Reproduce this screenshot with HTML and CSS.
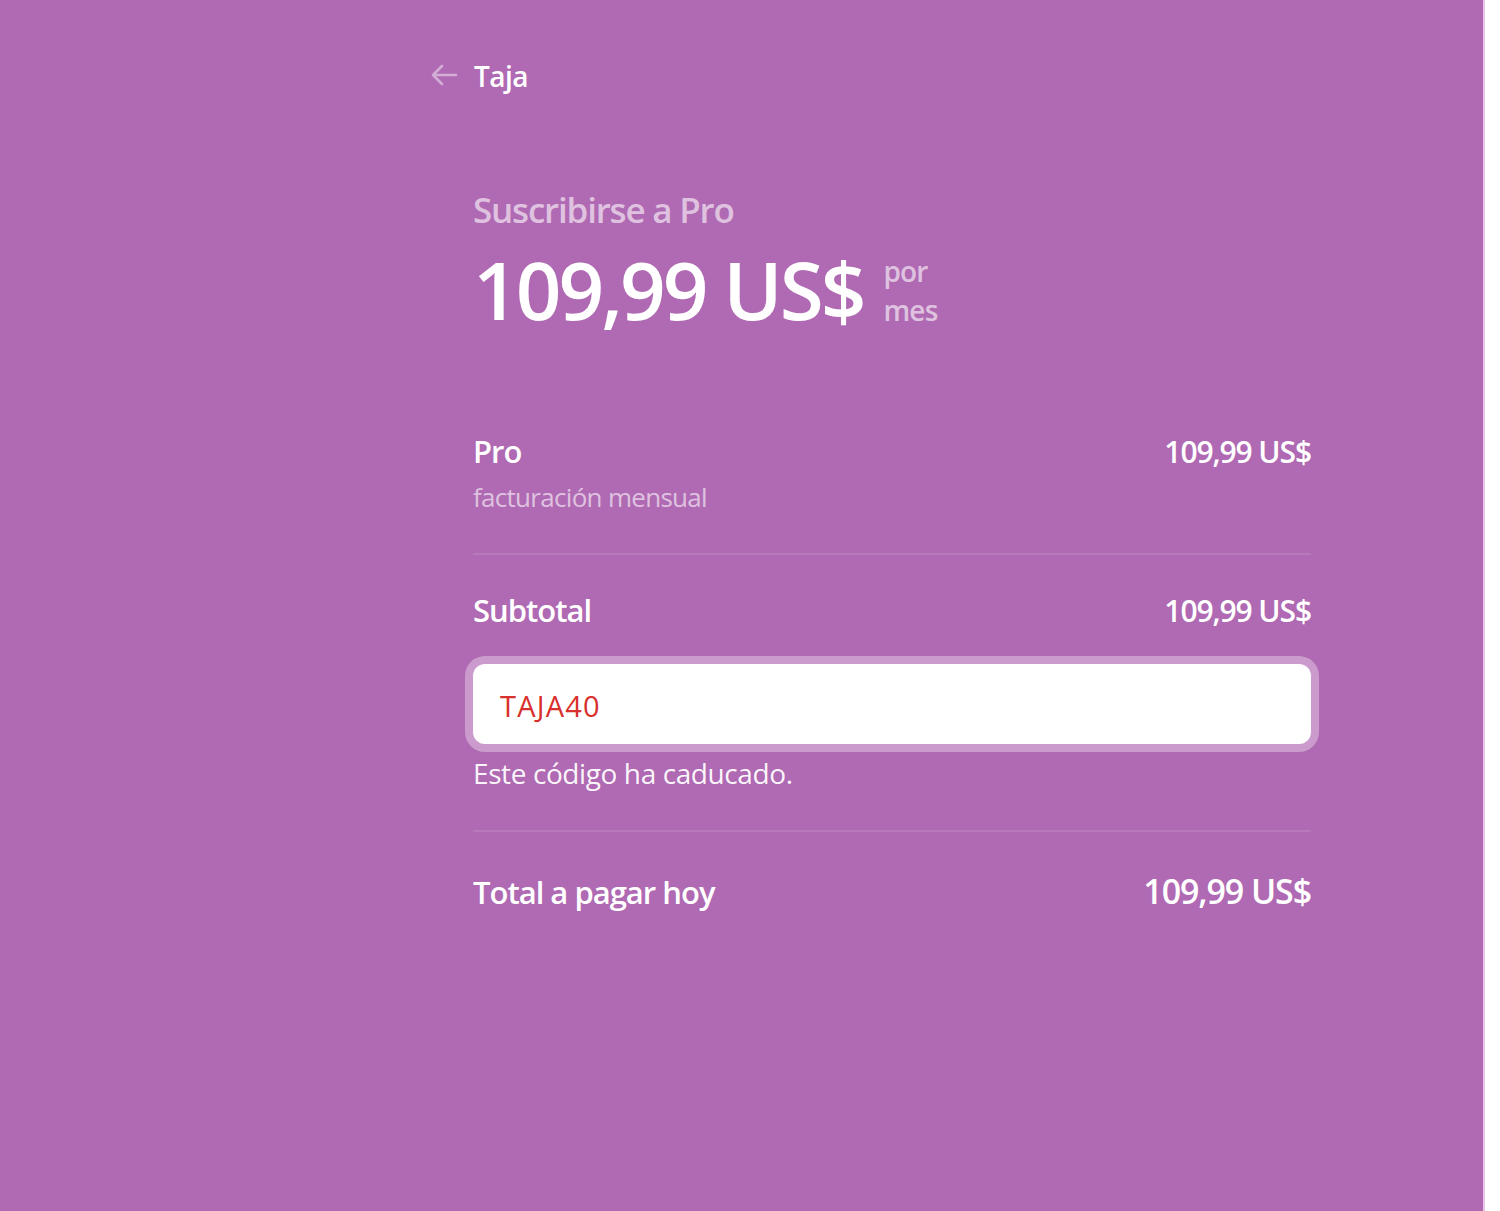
FILE: index.html
```html
<!DOCTYPE html>
<html lang="es">
<head>
<meta charset="utf-8">
<title>Taja - Suscribirse a Pro</title>
<link rel="stylesheet" href="styles.css">
</head>
<body>
<div class="page">
  <main class="panel">
    <header class="header">
      <svg class="back" width="28" height="22" viewBox="0 0 28 22" aria-hidden="true">
        <path d="M26 11H3M12 2L3 11l9 9" fill="none" stroke="currentColor" stroke-width="2.6" stroke-linecap="round" stroke-linejoin="round"/>
      </svg>
      <span class="brand">Taja</span>
    </header>
    <section class="summary">
      <div class="title">Suscribirse a Pro</div>
      <div class="price-row">
        <span class="price">109,99 US$</span>
        <span class="period"><span>por</span><span>mes</span></span>
      </div>
      <div class="item">
        <div class="row">
          <span class="label">Pro</span>
          <span class="amount">109,99 US$</span>
        </div>
        <div class="sub">facturación mensual</div>
      </div>
      <hr class="divider">
      <div class="row subtotal">
        <span class="label">Subtotal</span>
        <span class="amount">109,99 US$</span>
      </div>
      <div class="promo">TAJA40</div>
      <div class="error">Este código ha caducado.</div>
      <hr class="divider second">
      <div class="row total">
        <span class="label">Total a pagar hoy</span>
        <span class="amount big">109,99 US$</span>
      </div>
    </section>
  </main>
  <aside class="side"></aside>
</div>
</body>
</html>
```
FILE: styles.css
```css
html, body {
  margin: 0;
  padding: 0;
  height: 100%;
}
body {
  font-family: "Open Sans", "Noto Sans", sans-serif;
  background: #ffffff;
  color: #ffffff;
}
.page {
  display: flex;
  height: 1211px;
}
.panel {
  width: 1485px;
  background: #b06ab3;
  border-right: 2px solid #e7c6ea;
  padding: 56px 0 0 430px;
  box-sizing: border-box;
}
.side {
  flex: 1;
  background: #ffffff;
}
.header {
  display: flex;
  align-items: center;
  height: 40px;
}
.back {
  color: rgba(255, 255, 255, 0.45);
  margin-top: -2px;
}
.brand {
  margin-left: 16px;
  font-size: 28px;
  font-weight: 600;
  line-height: 40px;
  letter-spacing: -0.5px;
}
.summary {
  margin-left: 43px;
  width: 838px;
}
.title {
  margin-top: 90px;
  font-size: 35px;
  font-weight: 600;
  line-height: 48px;
  color: rgba(255, 255, 255, 0.6);
  letter-spacing: -1.2px;
}
.price-row {
  display: flex;
  align-items: flex-end;
  margin-top: 5px;
}
.price {
  font-size: 80px;
  font-weight: 600;
  line-height: 100px;
  letter-spacing: -3px;
}
.period {
  display: flex;
  flex-direction: column;
  margin: 0 0 9px 20px;
  font-size: 28px;
  font-weight: 600;
  line-height: 39px;
  color: rgba(255, 255, 255, 0.6);
  letter-spacing: -0.8px;
}
.item {
  margin-top: 90px;
}
.row {
  display: flex;
  justify-content: space-between;
  align-items: baseline;
}
.label {
  font-size: 31px;
  font-weight: 600;
  line-height: 44px;
  letter-spacing: -1px;
}
.amount {
  font-size: 30px;
  font-weight: 600;
  line-height: 44px;
  letter-spacing: -1.1px;
}
.amount.big {
  font-size: 34px;
  letter-spacing: -1.1px;
}
.sub {
  margin-top: 5px;
  font-size: 26px;
  line-height: 37px;
  color: rgba(255, 255, 255, 0.6);
  letter-spacing: -0.7px;
}
.divider {
  margin: 37px 0 0;
  border: 0;
  height: 2px;
  background: rgba(255, 255, 255, 0.1);
}
.subtotal {
  margin-top: 33px;
}
.promo {
  margin-top: 31px;
  height: 80px;
  box-sizing: border-box;
  padding: 3px 0 0 27px;
  display: flex;
  align-items: center;
  background: #ffffff;
  border-radius: 12px;
  box-shadow: 0 0 0 8px rgba(255, 255, 255, 0.33);
  color: #d8302c;
  font-size: 29px;
  letter-spacing: 1.2px;
}
.error {
  margin-top: 9px;
  font-size: 28px;
  line-height: 40px;
  color: rgba(255, 255, 255, 0.95);
  letter-spacing: -0.4px;
}
.divider.second {
  margin-top: 37px;
}
.total {
  margin-top: 37px;
}
```
